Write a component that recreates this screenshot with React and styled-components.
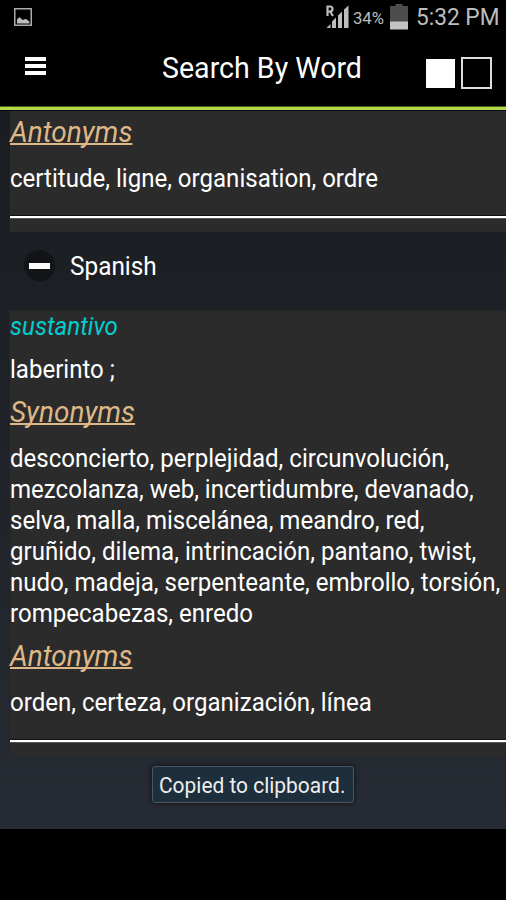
import React from 'react';
import styled, { createGlobalStyle } from 'styled-components';

const GlobalStyle = createGlobalStyle`
* { box-sizing: border-box; }
body {
margin: 0;
background-color: #000;
font-family: Roboto, "Noto Sans", sans-serif;
}
`;
const Container = styled.div`
width: 506px;
height: 900px;
overflow: hidden;
background-color: #000;
color: #fff;
display: flex;
flex-direction: column;
`;
const StatusBar = styled.div`
height: 36px;
padding: 0 8px 0 14px;
display: flex;
align-items: flex-start;
justify-content: space-between;
color: #bdbdbd;
`;
const StatusIcons = styled.div`
display: flex;
align-items: flex-start;
`;
const Percent = styled.span`
width: 37px;
margin-left: 3px;
font-size: 17px;
line-height: 20px;
padding-top: 8px;
white-space: nowrap;
transform: scaleX(0.98);
transform-origin: 0 0;
`;
const Clock = styled.span`
width: 82px;
font-size: 23.5px;
line-height: 27px;
padding-top: 4px;
margin-left: 8px;
white-space: nowrap;
transform: scaleX(0.965);
transform-origin: 0 0;
`;
const Header = styled.div`
height: 70px;
padding: 0 14px 0 25px;
display: flex;
align-items: flex-start;
`;
const MenuButton = styled.button`
width: 21px;
height: 18px;
margin-top: 21px;
padding: 0;
border: none;
background: none;
display: flex;
flex-direction: column;
justify-content: space-between;
cursor: pointer;
`;
const MenuBar = styled.span`
width: 21px;
height: 4px;
background-color: #fff;
`;
const Title = styled.h1`
flex: 1;
margin: 15px 0 0 116px;
font-size: 29px;
font-weight: 400;
line-height: 34px;
white-space: nowrap;
transform: scaleX(0.985);
transform-origin: 0 0;
`;
const Swatch = styled.div`
width: ${(p) => (p.$filled ? 29 : 31)}px;
height: ${(p) => (p.$filled ? 29 : 32)}px;
margin-top: ${(p) => (p.$filled ? 23 : 21)}px;
margin-left: ${(p) => (p.$filled ? 0 : 6)}px;
border: ${(p) => (p.$filled ? '0 solid #fff' : '2px solid #ddd')};
background-color: ${(p) => (p.$filled ? '#fff' : '#000')};
`;
const Accent = styled.div`
height: 5px;
background-color: #b4da48;
border-top: 1px solid #4e5e22;
border-bottom: 1px solid #070818;
`;
const Content = styled.div`
height: 718px;
padding-left: 10px;
background: linear-gradient(#1a1d22, #1c1f24 22%, #272b33);
position: relative;
`;
const Panel = styled.div`
background-color: #2b2b2b;
padding: ${(p) => p.$top || 0}px 0 14px;
box-shadow: ${(p) => (p.$edge ? '-1px -1px 0 #222425' : 'none')};
`;
const Heading = styled.h2`
width: max-content;
margin: ${(p) => p.$gap || 0}px 0 14px;
font-size: 29px;
font-weight: 400;
font-style: italic;
line-height: 34px;
color: #deb887;
text-decoration: underline;
text-decoration-thickness: 2px;
text-decoration-skip-ink: none;
text-underline-offset: 1px;
transform: scaleX(0.965);
transform-origin: 0 0;
`;
const Words = styled.p`
width: max-content;
margin: 0;
font-size: 25px;
line-height: 31px;
white-space: pre;
transform: scaleX(0.962);
transform-origin: 0 0;
`;
const PartOfSpeech = styled(Words)`
margin-bottom: 12px;
font-style: italic;
color: #00ced1;
`;
const Rule = styled.hr`
height: 2px;
margin: 22px 0 0;
border: none;
background-color: #fff;
box-shadow: 0 -1px 0 #111, 0 1px 0 #555;
`;
const Language = styled.div`
height: 79px;
padding: 18px 0 0 14px;
display: flex;
`;
const Collapse = styled.button`
width: 31px;
height: 31px;
padding: 0;
border: none;
border-radius: 50%;
background-color: #131417;
display: flex;
align-items: center;
justify-content: center;
cursor: pointer;
`;
const Minus = styled.span`
width: 21px;
height: 6px;
background-color: #fff;
`;
const LanguageName = styled.span`
margin-left: 15px;
padding-top: 1px;
font-size: 25.5px;
line-height: 31px;
transform: scaleX(0.955);
transform-origin: 0 0;
`;
const Toast = styled.div`
position: absolute;
left: 152px;
top: 655px;
width: 202px;
height: 37px;
padding-left: 6px;
border: 1px solid #4b5660;
border-radius: 3px;
background-color: #1d2e3d;
box-shadow: 0 0 5px rgba(0, 0, 0, 0.7);
font-size: 22.5px;
line-height: 37px;
color: #eee;
white-space: nowrap;
`;
const ToastText = styled.div`
width: max-content;
transform: scaleX(0.93);
transform-origin: 0 0;
`;

const synonyms = [
    'desconcierto, perplejidad, circunvolución,',
    'mezcolanza, web, incertidumbre, devanado,',
    'selva, malla, miscelánea, meandro, red,',
    'gruñido, dilema, intrincación, pantano, twist,',
    'nudo, madeja, serpenteante, embrollo, torsión,',
    'rompecabezas, enredo',
];

const Picture = styled.svg`
margin-top: 8px;
`;

const PictureIcon = () => (
    <Picture width="18" height="18" viewBox="0 0 18 18">
        <rect x="0.75" y="0.75" width="16.5" height="16.5" fill="none" stroke="#aaa" strokeWidth="1.5" />
        <path d="M3 15.5V11.5L4.5 10L5.5 9.2L6.5 10L8 11.5L9 12L11 11L13 11.5L14.5 13L15.5 13.5V15.5z" fill="#bdbdbd" />
    </Picture>
);

const SignalIcon = () => (
    <svg width="24" height="29" viewBox="0 0 24 29" fill="#bdbdbd">
        <path d="M1.500 16V6.500H4a2.500 2.500 0 0 1 0 5H1.500M4 11.500l3 4.500" fill="none" stroke="#bdbdbd" strokeWidth="2.2" />
        <path d="M0.500 28l4-4v4zM6 28v-6.500l4-4V28zM12 28V15.500l4-4V28zM18 28V9.500l4.500-4V28z" />
    </svg>
);

const BatteryIcon = () => (
    <svg width="18" height="30" viewBox="0 0 18 30">
        <path d="M5.500 4h7v2H18v16H0V6h5.500z" fill="#4c4c4c" />
        <rect y="21.500" width="18" height="8" fill="#c3c3c3" />
    </svg>
);

const App = () => {
  return (
    <Container>
        <GlobalStyle />
        <StatusBar>
            <PictureIcon />
            <StatusIcons>
                <SignalIcon />
                <Percent>34%</Percent>
                <BatteryIcon />
                <Clock>5:32 PM</Clock>
            </StatusIcons>
        </StatusBar>
        <Header>
            <MenuButton>
                <MenuBar />
                <MenuBar />
                <MenuBar />
            </MenuButton>
            <Title>Search By Word</Title>
            <Swatch $filled />
            <Swatch />
        </Header>
        <Accent />
        <Content>
            <Panel $top={4}>
                <Heading>Antonyms</Heading>
                <Words>certitude, ligne, organisation, ordre</Words>
                <Rule />
            </Panel>
            <Language>
                <Collapse><Minus /></Collapse>
                <LanguageName>Spanish</LanguageName>
            </Language>
            <Panel $edge>
                <PartOfSpeech>sustantivo</PartOfSpeech>
                <Words>laberinto ;</Words>
                <Heading $gap={10}>Synonyms</Heading>
                {synonyms.map((line) => <Words key={line}>{line}</Words>)}
                <Heading $gap={10}>Antonyms</Heading>
                <Words>orden, certeza, organización, línea</Words>
                <Rule />
            </Panel>
            <Toast>
                <ToastText>Copied to clipboard.</ToastText>
            </Toast>
        </Content>
    </Container>
  )
}

export default App;
